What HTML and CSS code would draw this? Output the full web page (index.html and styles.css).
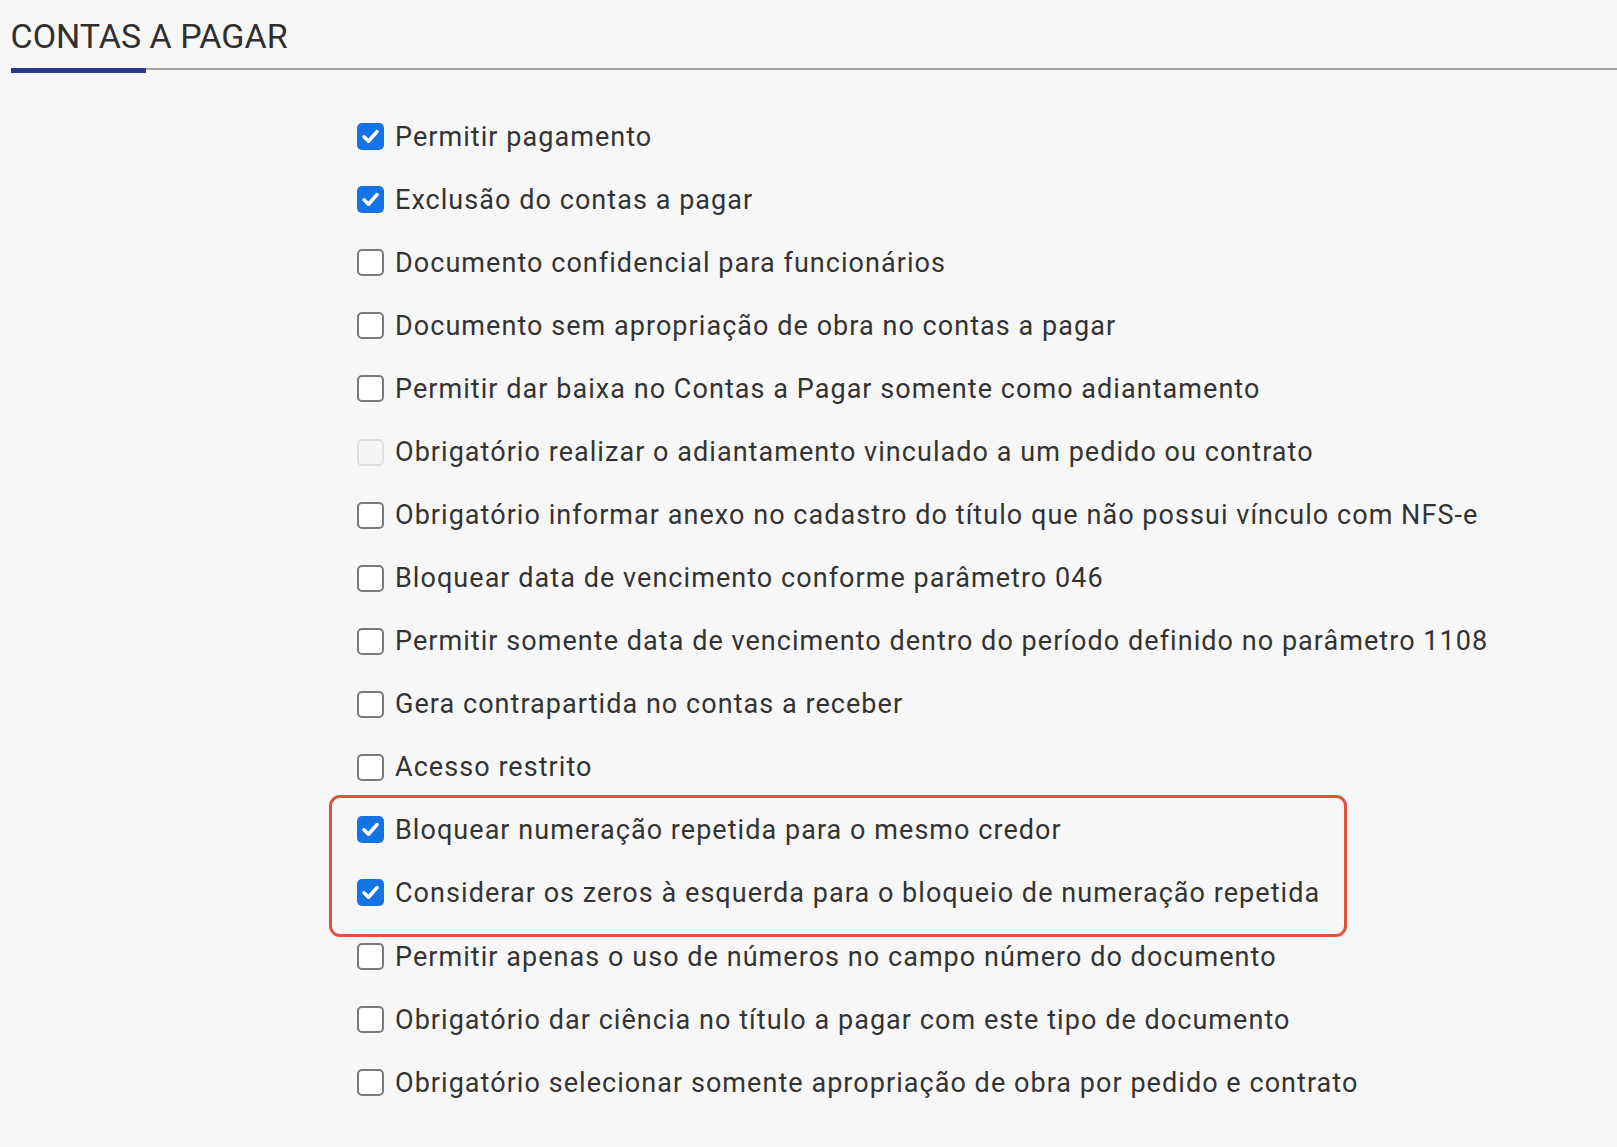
FILE: index.html
```html
<!DOCTYPE html>
<html lang="pt-BR">
<head>
<meta charset="utf-8">
<title>Contas a pagar</title>
<link rel="stylesheet" href="styles.css">
</head>
<body>
<header class="header">
  <h1 class="title">CONTAS A PAGAR</h1>
  <div class="rule"><span class="rule-accent"></span><span class="rule-line"></span></div>
</header>
<main class="options">
  <label class="row"><span class="cb checked"><svg viewBox="0 0 27 27"><polyline points="7,13.8 11.5,18.2 20,8.6"/></svg></span><span class="text">Permitir pagamento</span></label>
  <label class="row"><span class="cb checked"><svg viewBox="0 0 27 27"><polyline points="7,13.8 11.5,18.2 20,8.6"/></svg></span><span class="text">Exclusão do contas a pagar</span></label>
  <label class="row"><span class="cb"></span><span class="text">Documento confidencial para funcionários</span></label>
  <label class="row"><span class="cb"></span><span class="text">Documento sem apropriação de obra no contas a pagar</span></label>
  <label class="row"><span class="cb"></span><span class="text">Permitir dar baixa no Contas a Pagar somente como adiantamento</span></label>
  <label class="row"><span class="cb disabled"></span><span class="text">Obrigatório realizar o adiantamento vinculado a um pedido ou contrato</span></label>
  <label class="row"><span class="cb"></span><span class="text">Obrigatório informar anexo no cadastro do título que não possui vínculo com NFS-e</span></label>
  <label class="row"><span class="cb"></span><span class="text">Bloquear data de vencimento conforme parâmetro 046</span></label>
  <label class="row"><span class="cb"></span><span class="text">Permitir somente data de vencimento dentro do período definido no parâmetro 1108</span></label>
  <label class="row"><span class="cb"></span><span class="text">Gera contrapartida no contas a receber</span></label>
  <label class="row"><span class="cb"></span><span class="text">Acesso restrito</span></label>
  <div class="highlight">
    <label class="row"><span class="cb checked"><svg viewBox="0 0 27 27"><polyline points="7,13.8 11.5,18.2 20,8.6"/></svg></span><span class="text">Bloquear numeração repetida para o mesmo credor</span></label>
    <label class="row"><span class="cb checked"><svg viewBox="0 0 27 27"><polyline points="7,13.8 11.5,18.2 20,8.6"/></svg></span><span class="text">Considerar os zeros à esquerda para o bloqueio de numeração repetida</span></label>
  </div>
  <label class="row"><span class="cb"></span><span class="text">Permitir apenas o uso de números no campo número do documento</span></label>
  <label class="row"><span class="cb"></span><span class="text">Obrigatório dar ciência no título a pagar com este tipo de documento</span></label>
  <label class="row"><span class="cb"></span><span class="text">Obrigatório selecionar somente apropriação de obra por pedido e contrato</span></label>
</main>
</body>
</html>
```

FILE: styles.css
```css
html, body {
  margin: 0;
  padding: 0;
}

body {
  background: #f7f7f7;
  color: #333;
  font-family: Roboto, "Liberation Sans", Arial, sans-serif;
  width: 1617px;
  height: 1147px;
  overflow: hidden;
}

.header {
  padding: 15.7px 0 0 10.5px;
}

.title {
  margin: 0;
  font-size: 34px;
  font-weight: 400;
  line-height: 40px;
  color: #2f2f2f;
}

.rule {
  display: flex;
  align-items: flex-start;
  margin-top: 12.3px;
}

.rule-accent {
  width: 135px;
  height: 5px;
  background: #2b3990;
}

.rule-line {
  flex: 1;
  height: 2px;
  background: #a3a3a3;
}

.options {
  display: flex;
  flex-direction: column;
  padding-left: 357px;
  margin-top: 32px;
}

.row {
  display: flex;
  align-items: center;
  height: 63.1px;
  gap: 11px;
  cursor: pointer;
}

.cb {
  box-sizing: border-box;
  width: 27px;
  height: 27px;
  flex: 0 0 27px;
  border: 2px solid #7a7a7a;
  border-radius: 5px;
  background: #fff;
  display: flex;
}

.cb.checked {
  border: none;
  background: #1473e6;
}

.cb svg {
  width: 27px;
  height: 27px;
}

.cb polyline {
  fill: none;
  stroke: #fff;
  stroke-width: 3.6;
  stroke-linecap: round;
  stroke-linejoin: round;
}

.cb.disabled {
  border-color: #dedede;
  background: #f5f5f5;
}

.text {
  font-size: 27px;
  letter-spacing: 1.05px;
  color: #333;
  white-space: nowrap;
}

.highlight {
  display: flex;
  flex-direction: column;
  box-sizing: border-box;
  width: 1018px;
  margin: -3.7px 0 -12.1px -28px;
  padding: 0 0 9.8px 25px;
  border: 3px solid #e5503c;
  border-radius: 11px;
}
```
